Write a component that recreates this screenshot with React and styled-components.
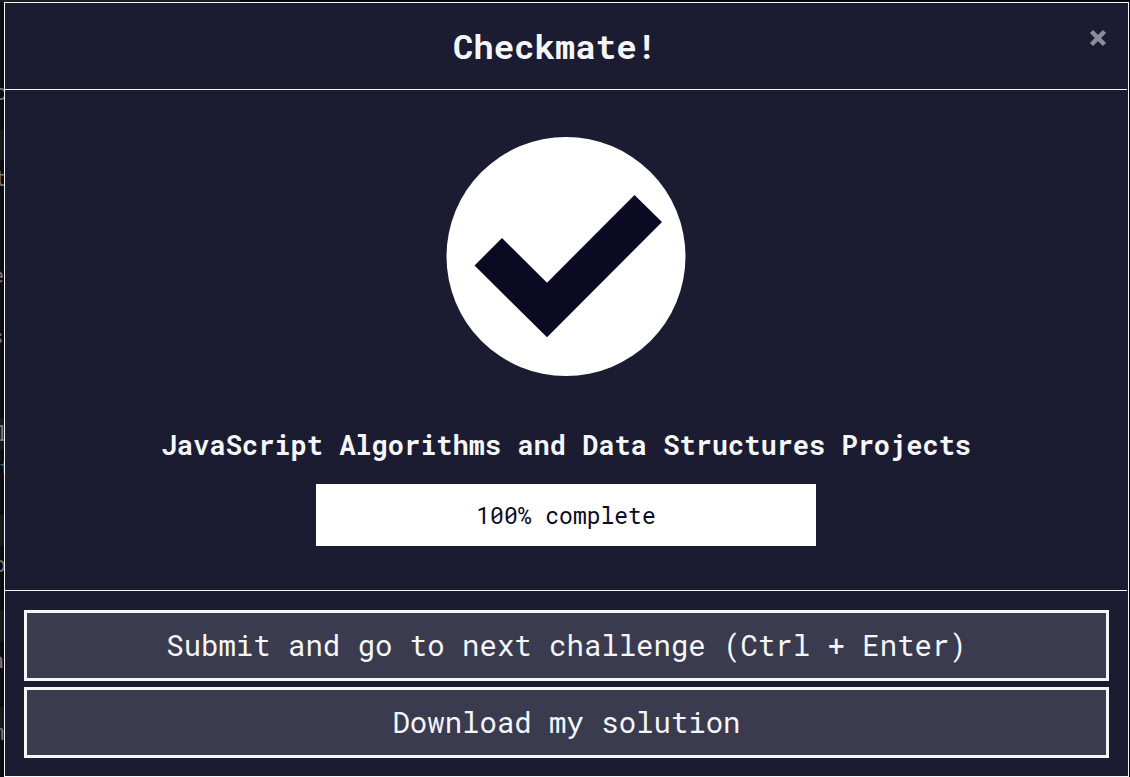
import React from "react";
import styled, { createGlobalStyle } from "styled-components";

const GlobalStyle = createGlobalStyle`
  * { box-sizing: border-box; }
  body {
    margin: 0;
    background: #06060f;
    color: #f5f6f7;
    font-family: "Roboto Mono", "DejaVu Sans Mono", "Liberation Mono", monospace;
  }
`;

const Page = styled.div`
  position: relative;
  min-height: 100vh;
  padding: 2px 1px 0 4px;
  display: flex;
  overflow: hidden;
`;

const Backdrop = styled.div`
  position: absolute;
  inset: 0;
  background: #06060f;
`;

const EditorEdge = styled.div`
  width: 240px;
  height: 100%;
  background: #0c0c10;
  border-top: 2px solid #1d1d22;
`;

const Glyph = styled.span`
  position: absolute;
  top: ${(p) => p.$top}px;
  left: ${(p) => p.$left}px;
  font-size: 22px;
  line-height: 24px;
  color: ${(p) => p.$color || "#77777a"};
`;

const Band = styled.span`
  position: absolute;
  left: 0;
  top: ${(p) => p.$top}px;
  width: 4px;
  height: 31px;
  background: #18181b;
`;

const Dialog = styled.section`
  position: relative;
  flex: 1;
  display: flex;
  flex-direction: column;
  padding-right: 1px;
  border: 1px solid #f5f6f7;
  background: #1b1b32;
`;

const Header = styled.header`
  display: grid;
  grid-template-columns: 1fr 18px;
  align-items: center;
  height: 87px;
  padding: 0 20px 0 16px;
  border-bottom: 1px solid #f5f6f7;
`;

const Title = styled.h1`
  margin: 0;
  font-size: 34px;
  line-height: 40px;
  font-weight: 700;
  text-align: center;
`;

const CloseButton = styled.button`
  align-self: start;
  display: flex;
  margin: 26px 0 0;
  padding: 0;
  border: 0;
  background: none;
  color: #8d8d9b;
`;

const Body = styled.main`
  flex: 1;
  display: flex;
  flex-direction: column;
  align-items: center;
  padding: 47px 20px 44px;
`;

const ProjectName = styled.h2`
  margin: 49px 0 19px;
  font-size: 27px;
  line-height: 40px;
  font-weight: 700;
  text-align: center;
`;

const Progress = styled.div`
  width: 500px;
  max-width: 100%;
  padding: 16px;
  background: #fff;
  color: #0a0a23;
  font-size: 23px;
  line-height: 30px;
  text-align: center;
`;

const Footer = styled.footer`
  display: flex;
  flex-direction: column;
  gap: 6px;
  padding: 19px 18px 18px 19px;
  border-top: 1px solid #f5f6f7;
`;

const ActionButton = styled.button`
  height: 71px;
  padding: 0 12px 2px;
  border: 3px solid #f5f6f7;
  border-radius: 0;
  background: #3b3b4f;
  color: #f5f6f7;
  font-family: inherit;
  font-size: 29px;
  line-height: 40px;
`;

const bands = [129, 418, 515, 610, 707];

const glyphs = [
  { char: "c", top: 80, left: -6 },
  { char: "t", top: 166, left: -6 },
  { char: "e", top: 263, left: -9 },
  { char: "s", top: 324, left: -10 },
  { char: "l", top: 421, left: -5 },
  { char: "t", top: 456, left: -1, color: "#2a6478" },
  { char: "o", top: 552, left: -7 },
  { char: "a", top: 648, left: -9 },
  { char: "m", top: 720, left: -9 },
];

export default function App() {
  return (
    <Page>
      <GlobalStyle />
      <Backdrop aria-hidden="true">
        <EditorEdge />
        {bands.map((top) => (
          <Band key={top} $top={top} />
        ))}
        {glyphs.map((g) => (
          <Glyph key={g.top} $top={g.top} $left={g.left} $color={g.color}>
            {g.char}
          </Glyph>
        ))}
      </Backdrop>
      <Dialog role="dialog" aria-labelledby="dialog-title">
        <Header>
          <Title id="dialog-title">Checkmate!</Title>
          <CloseButton type="button" aria-label="Close">
            <svg width="18" height="18" viewBox="0 0 18 18" aria-hidden="true">
              <path d="M2.5 2.5 15.5 15.5M15.5 2.5 2.5 15.5" stroke="currentColor" strokeWidth="4.5" />
            </svg>
          </CloseButton>
        </Header>
        <Body>
          <svg width="240" height="239" viewBox="0 0 240 239" role="img" aria-label="Passed">
            <circle cx="120" cy="119.500" r="119.500" fill="#fff" />
            <path d="M28.500 128.500 56 101 101 145.700 188.500 58 216 85 101 200.300Z" fill="#0a0a23" />
          </svg>
          <ProjectName>JavaScript Algorithms and Data Structures Projects</ProjectName>
          <Progress>100% complete</Progress>
        </Body>
        <Footer>
          <ActionButton type="button">Submit and go to next challenge (Ctrl + Enter)</ActionButton>
          <ActionButton type="button">Download my solution</ActionButton>
        </Footer>
      </Dialog>
    </Page>
  );
}
